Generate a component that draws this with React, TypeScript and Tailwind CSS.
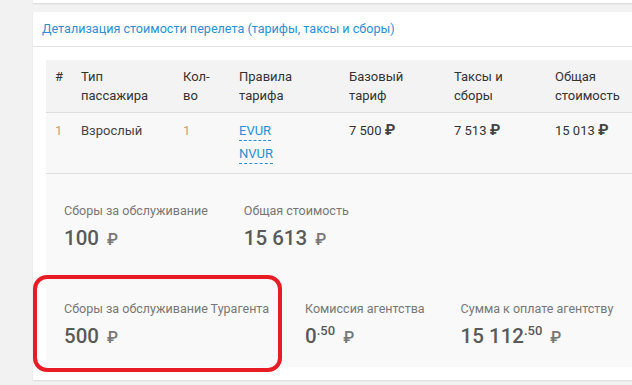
import React from "react";

type Col = { key: string; head: string[]; w: string };

const cols: Col[] = [
    { key: "n", head: ["#"], w: "w-[26px]" },
    { key: "type", head: ["Тип", "пассажира"], w: "w-[102px]" },
    { key: "qty", head: ["Кол-", "во"], w: "w-[56px]" },
    { key: "rules", head: ["Правила", "тарифа"], w: "w-[110px]" },
    { key: "base", head: ["Базовый", "тариф"], w: "w-[105px]" },
    { key: "tax", head: ["Таксы и", "сборы"], w: "w-[101px]" },
    { key: "total", head: ["Общая", "стоимость"], w: "w-[120px]" },
];

function Rub() {
    return <span className="text-[15px] font-bold text-[#444]">₽</span>;
}

function Amount({ whole, cents }: { whole: string; cents?: string }) {
    return (
        <div className="mt-[6px] flex items-baseline text-[#5a5a5a]">
            <span className="text-[20.5px] font-medium leading-[26px]">{whole}</span>
            {cents ? (
                <span className="relative -top-[8px] text-[13px] font-medium">.{cents}</span>
            ) : null}
            <span className="ml-[8px] text-[16px] font-medium text-[#777]">₽</span>
        </div>
    );
}

function Stat({ label, whole, cents }: { label: string; whole: string; cents?: string }) {
    return (
        <div>
            <div className="text-[12.5px] leading-[16px] text-[#777]">{label}</div>
            <Amount whole={whole} cents={cents} />
        </div>
    );
}

export default function App() {
    return (
        <div
            className="relative w-[632px] h-[385px] overflow-hidden bg-[#f2f2f2]"
            style={{ fontFamily: "Roboto, 'Liberation Sans', sans-serif" }}
        >
            <div className="ml-[33px] h-[3px] w-[620px] bg-white shadow-[0_1px_2px_rgba(0,0,0,0.12)]" />

            <div className="ml-[33px] mt-[9px] w-[620px] bg-white rounded-tl-[2px] shadow-[0_1px_2px_rgba(0,0,0,0.1)]">
                <div className="h-[35px] pl-[9px] border-b border-[#e3e3e3] flex items-center text-[12.6px] text-[#2b8fd4]">
                    Детализация стоимости перелета (тарифы, таксы и сборы)
                </div>

                <div className="px-[13px] pt-[13px] pb-[13px]">
                    <div className="w-[600px] bg-[#f9f9f9] text-[13px] text-[#333]">
                        {/* header */}
                        <div className="h-[53px] flex bg-[#f3f3f3] border-b border-[#dedede]">
                            {cols.map(c => (
                                <div key={c.key} className={`${c.w} shrink-0 pl-[9px] pt-[7px] leading-[19px]`}>
                                    {c.head.map(h => (
                                        <div key={h}>{h}</div>
                                    ))}
                                </div>
                            ))}
                        </div>

                        {/* row */}
                        <div className="h-[61px] flex bg-[#f8f8f8] border-b border-[#dedede] leading-[19px]">
                            <div className="w-[26px] shrink-0 pl-[9px] pt-[8px] text-[#c9a26a]">1</div>
                            <div className="w-[102px] shrink-0 pl-[9px] pt-[8px] text-[#444]">Взрослый</div>
                            <div className="w-[56px] shrink-0 pl-[9px] pt-[8px] text-[#c9a26a]">1</div>
                            <div className="w-[110px] shrink-0 pl-[9px] pt-[8px] flex flex-col items-start gap-[3px]">
                                <span className="text-[#2b8fd4] border-b border-dashed border-[#2b8fd4]">EVUR</span>
                                <span className="text-[#2b8fd4] border-b border-dashed border-[#2b8fd4]">NVUR</span>
                            </div>
                            <div className="w-[105px] shrink-0 pl-[9px] pt-[8px]">
                                7 500 <Rub />
                            </div>
                            <div className="w-[101px] shrink-0 pl-[9px] pt-[8px]">
                                7 513 <Rub />
                            </div>
                            <div className="w-[120px] shrink-0 pl-[9px] pt-[8px]">
                                15 013 <Rub />
                            </div>
                        </div>

                        {/* summary */}
                        <div className="h-[193px] pl-[18px] pt-[29px]">
                            <div className="flex gap-[36px]">
                                <Stat label="Сборы за обслуживание" whole="100" />
                                <Stat label="Общая стоимость" whole="15 613" />
                            </div>
                            <div className="mt-[49px] flex gap-[36px]">
                                <Stat label="Сборы за обслуживание Турагента" whole="500" />
                                <Stat label="Комиссия агентства" whole="0" cents="50" />
                                <Stat label="Сумма к оплате агентству" whole="15 112" cents="50" />
                            </div>
                        </div>
                    </div>
                </div>
            </div>

            {/* red annotation */}
            <div className="absolute left-[33px] top-[275px] w-[249px] h-[97px] rounded-[14px] border-[4px] border-[#e81c24]" />
        </div>
    );
}
